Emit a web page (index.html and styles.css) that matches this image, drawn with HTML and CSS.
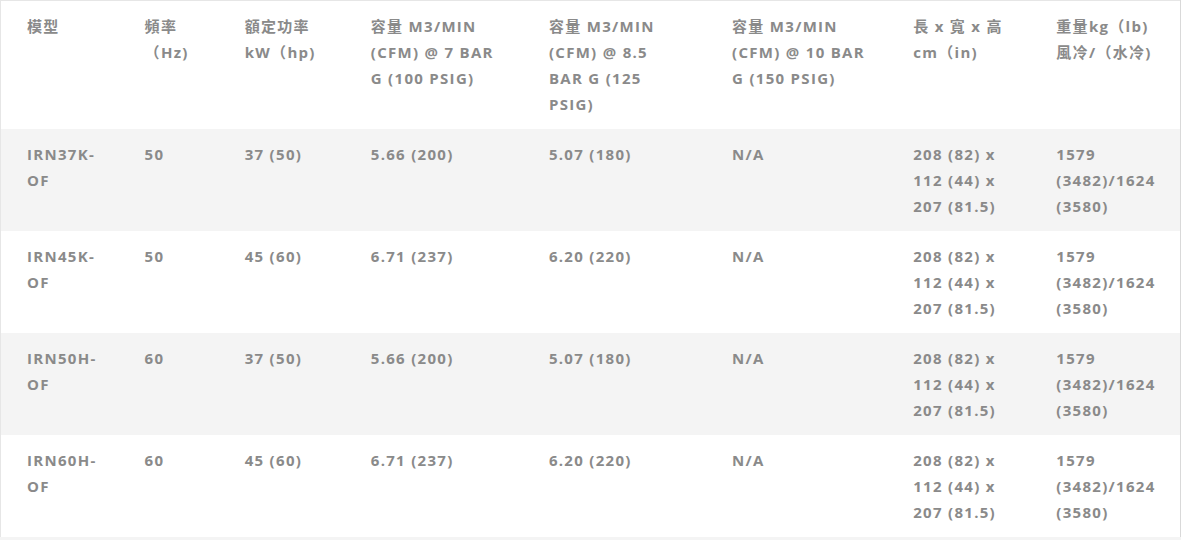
FILE: index.html
```html
<!DOCTYPE html>
<html lang="zh-Hant">
<head>
<meta charset="utf-8">
<title>規格表</title>
<link rel="stylesheet" href="styles.css">
</head>
<body>
<table class="spec">
  <colgroup>
    <col class="c1"><col class="c2"><col class="c3"><col class="c4">
    <col class="c5"><col class="c6"><col class="c7"><col class="c8">
  </colgroup>
  <thead>
    <tr>
      <th>模型</th>
      <th>頻率（Hz)</th>
      <th>額定功率 kW（hp)</th>
      <th>容量 M3/MIN (CFM) @ 7 BAR G (100 PSIG)</th>
      <th>容量 M3/MIN (CFM) @ 8.5 BAR G (125 PSIG)</th>
      <th>容量 M3/MIN (CFM) @ 10 BAR G (150 PSIG)</th>
      <th>長 x 寬 x 高 cm（in)</th>
      <th>重量kg（lb) 風冷/（水冷)</th>
    </tr>
  </thead>
  <tbody>
    <tr>
      <td>IRN37K-OF</td><td>50</td><td>37 (50)</td><td>5.66 (200)</td><td>5.07 (180)</td><td>N/A</td>
      <td>208 (82) x 112 (44) x 207 (81.5)</td><td>1579 (3482)/1624 (3580)</td>
    </tr>
    <tr>
      <td>IRN45K-OF</td><td>50</td><td>45 (60)</td><td>6.71 (237)</td><td>6.20 (220)</td><td>N/A</td>
      <td>208 (82) x 112 (44) x 207 (81.5)</td><td>1579 (3482)/1624 (3580)</td>
    </tr>
    <tr>
      <td>IRN50H-OF</td><td>60</td><td>37 (50)</td><td>5.66 (200)</td><td>5.07 (180)</td><td>N/A</td>
      <td>208 (82) x 112 (44) x 207 (81.5)</td><td>1579 (3482)/1624 (3580)</td>
    </tr>
    <tr>
      <td>IRN60H-OF</td><td>60</td><td>45 (60)</td><td>6.71 (237)</td><td>6.20 (220)</td><td>N/A</td>
      <td>208 (82) x 112 (44) x 207 (81.5)</td><td>1579 (3482)/1624 (3580)</td>
    </tr>
  </tbody>
</table>
</body>
</html>
```
FILE: styles.css
```css
html, body {
  margin: 0;
  padding: 0;
  background: #ffffff;
}

.spec {
  width: 1181px;
  border-collapse: collapse;
  table-layout: fixed;
  border-top: 1px solid #e6e6e6;
  border-left: 1px solid #e6e6e6;
  border-right: 1px solid #d9d9d9;
  border-bottom: 4px solid #f4f4f4;
  font-family: "Open Sans", "Noto Sans CJK TC", sans-serif;
  font-size: 15px;
  font-weight: 700;
  line-height: 26px;
  color: #8a8a8a;
  letter-spacing: 1.3px;
}

.c1 { width: 118px; }
.c2 { width: 100px; }
.c3 { width: 126px; }
.c4 { width: 178px; }
.c5 { width: 183px; }
.c6 { width: 181px; }
.c7 { width: 143px; }
.c8 { width: 150px; }

.spec th,
.spec td {
  padding: 12px 22px 12px 26px;
  text-align: left;
  vertical-align: top;
  font-weight: 700;
}

.spec tbody tr:nth-child(odd) {
  background: #f4f4f4;
}
```
